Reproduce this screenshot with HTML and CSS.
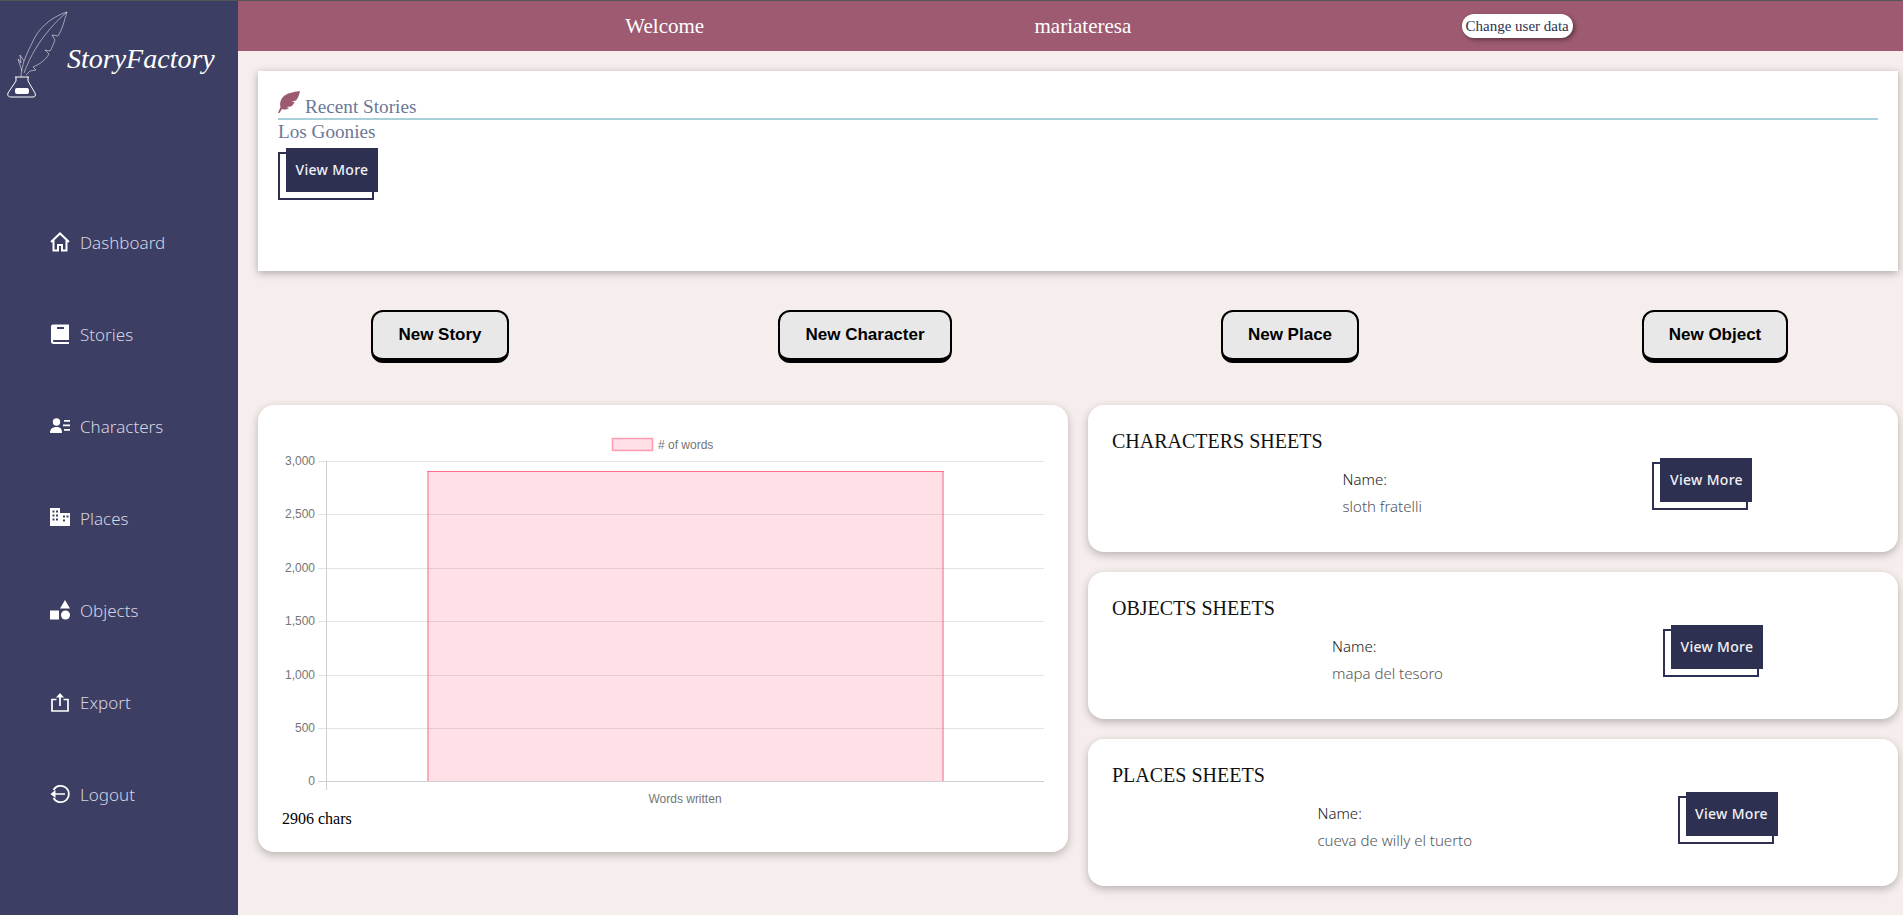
FILE: index.html
```html
<!DOCTYPE html>
<html lang="en">
<head>
    <meta charset="UTF-8">
    <meta name="viewport" content="width=device-width, initial-scale=1.0">
    <title>StoryFactory</title>
    <link rel="stylesheet" href="styles.css">
</head>
<body>
    <aside class="sidebar">
        <div class="logo">
            <svg class="logo-mark" viewBox="0 0 72 100" fill="none" stroke="#fff">
                <path stroke-width="0.7" stroke-opacity="0.75" d="M67 11C54 15 42 24 35 36C31 44 27 52 24 60C23 64 21 70 21 76M67 11C64 20 63 27 58 35L52 34L55 39C53 44 52 47 50 50L45 49L49 53C45 60 38 64 33 66L36 69L30 70L26 74M67 11C56 20 44 34 36 47C31 55 27 64 24 72M24 60L20 54L21 62L18 58L22 70"/>
                <path stroke-width="1" d="M15 76H29M16 76V80L8 92C7 95 9 96 11 96H33C35 96 36 95 35 92L28 80V76"/>
                <rect x="15" y="87" width="14" height="6" rx="2" fill="#fff" stroke="none"/>
            </svg>
            <span class="logo-text">StoryFactory</span>
        </div>
        <nav class="menu">
            <a class="menu-item" href="#">
                <svg class="menu-icon" viewBox="0 0 20 20" fill="none" stroke="#fff" stroke-width="2"><path d="M1 10L10 1.5L19 10M3.5 8V18.5H8V13H12V18.5H16.500V8"/></svg>
                Dashboard
            </a>
            <a class="menu-item" href="#">
                <svg class="menu-icon" viewBox="0 0 20 20" fill="#fff"><path fill-rule="evenodd" d="M3 0.500H19V16H4C2.500 16 2.500 18 4 18H19V20H3.500C1.800 20 1 19 1 17.500V2.500C1 1.200 1.800 0.500 3 0.500ZM7 3V5H14V3Z"/></svg>
                Stories
            </a>
            <a class="menu-item" href="#">
                <svg class="menu-icon" viewBox="0 0 20 20" fill="#fff"><circle cx="6.500" cy="6" r="3.700"/><path d="M0 17C0 13 2.500 11 6.500 11S12 13 12 17ZM14 4H20V5.800H14ZM13 8.500H20V10.300H13ZM14 13H20V14.800H14Z"/></svg>
                Characters
            </a>
            <a class="menu-item" href="#">
                <svg class="menu-icon" viewBox="0 0 20 20" fill="#fff"><path fill-rule="evenodd" d="M0 0H10V5H20V18H0ZM2.500 2.500V4.500H4.500V2.500ZM6 2.500V4.500H8V2.500ZM2.500 6.500V8.500H4.500V6.500ZM6 6.500V8.500H8V6.500ZM13 7.500V9.500H15V7.500ZM16.500 7.500V9.500H18.500V7.500ZM2.500 10.500V12.500H4.500V10.500ZM6 10.500V12.500H8V10.500ZM13 11.500V13.500H15V11.500Z"/></svg>
                Places
            </a>
            <a class="menu-item" href="#">
                <svg class="menu-icon" viewBox="0 0 20 20" fill="#fff"><path d="M15 0L20 8.500H10ZM0 10.500H9V19.500H0Z"/><circle cx="15.500" cy="15" r="4.500"/></svg>
                Objects
            </a>
            <a class="menu-item" href="#">
                <svg class="menu-icon" viewBox="0 0 20 20" fill="none" stroke="#fff" stroke-width="1.700"><path d="M6.500 7.500H2V19H18V7.500H13.500M10 14V2"/><path d="M6 5.500L10 1L14 5.500Z" fill="#fff" stroke="none"/></svg>
                Export
            </a>
            <a class="menu-item" href="#">
                <svg class="menu-icon" viewBox="0 0 20 20" fill="none" stroke="#fff" stroke-width="1.700"><path d="M3.500 6A8.200 8.200 0 1 1 3.500 14M5 10H15"/><path d="M0.500 10L5.500 6V14Z" fill="#fff" stroke="none"/></svg>
                Logout
            </a>
        </nav>
    </aside>

    <div class="main">
        <header class="topbar">
            <span>Welcome</span>
            <span>mariateresa</span>
            <a class="user-link" href="#">Change user data</a>
        </header>

        <section class="recent">
            <div class="recent-head">
                <svg class="feather" viewBox="0 0 22 22" fill="#9c5a70"><path d="M22 0C15 1 8 2.500 5 6C2 9.500 1.500 13 2.500 16L0 22H1.500L4 18C7 19 9 18.500 11 17L8.500 16L13 15.500C15 14 16 12.500 16.500 11L13.500 10.500L18 9.500C20 7 21.500 3 22 0Z"/></svg>
                <span>Recent Stories</span>
            </div>
            <div class="recent-title">Los Goonies</div>
            <a class="more-btn" href="#">View More</a>
        </section>

        <div class="actions">
            <div class="action-col"><button class="action-btn">New Story</button></div>
            <div class="action-col"><button class="action-btn">New Character</button></div>
            <div class="action-col"><button class="action-btn">New Place</button></div>
            <div class="action-col"><button class="action-btn">New Object</button></div>
        </div>

        <div class="panels">
            <section class="chart-card">
                <svg class="chart" viewBox="0 0 762 384" width="762" height="384">
                    <g stroke="#e3e3e3" stroke-width="1">
                        <path d="M36 36.500H762M36 89.500H762M36 143.500H762M36 196.500H762M36 250.500H762M36 303.500H762"/>
                    </g>
                    <path d="M44.500 36V365M36 356.500H762" stroke="#cfcfcf" stroke-width="1"/>
                    <rect x="145" y="46" width="517" height="310" fill="#ff6384" fill-opacity="0.2"/>
                    <path d="M145 46.500H662" fill="none" stroke="#ff6384" stroke-opacity="0.9" stroke-width="1"/>
                    <path d="M146 47V356M661 47V356" fill="none" stroke="#ff6384" stroke-opacity="0.45" stroke-width="2"/>
                    <rect x="330.500" y="13.500" width="40" height="12" fill="#ff6384" fill-opacity="0.2" stroke="#ff6384" stroke-opacity="0.6" stroke-width="1.500"/>
                    <g class="chart-text">
                        <text x="376" y="24">
                            # of words
                        </text>
                        <text x="403" y="378" text-anchor="middle">Words written</text>
                        <g text-anchor="end">
                            <text x="33" y="40">3,000</text>
                            <text x="33" y="93">2,500</text>
                            <text x="33" y="147">2,000</text>
                            <text x="33" y="200">1,500</text>
                            <text x="33" y="254">1,000</text>
                            <text x="33" y="307">500</text>
                            <text x="33" y="360">0</text>
                        </g>
                    </g>
                </svg>
                <div class="chars">2906 chars</div>
            </section>

            <div class="sheets">
                <section class="sheet-card">
                    <h3>CHARACTERS SHEETS</h3>
                    <div class="sheet-row">
                        <div class="sheet-name"><p class="name-label">Name:</p><p>sloth fratelli</p></div>
                        <a class="more-btn" href="#">View More</a>
                    </div>
                </section>
                <section class="sheet-card">
                    <h3>OBJECTS SHEETS</h3>
                    <div class="sheet-row">
                        <div class="sheet-name"><p class="name-label">Name:</p><p>mapa del tesoro</p></div>
                        <a class="more-btn" href="#">View More</a>
                    </div>
                </section>
                <section class="sheet-card">
                    <h3>PLACES SHEETS</h3>
                    <div class="sheet-row">
                        <div class="sheet-name"><p class="name-label">Name:</p><p>cueva de willy el tuerto</p></div>
                        <a class="more-btn" href="#">View More</a>
                    </div>
                </section>
            </div>
        </div>
    </div>
</body>
</html>
```

FILE: styles.css
```css
/* General */
body {
    margin: 0;
    height: 914px;
    display: flex;
    overflow: hidden;
    border-top: 1px solid #555;
    background-color: #f6eeec;
    font-family: 'Liberation Serif', serif;
}

a {
    text-decoration: none;
}

/* Sidebar */
.sidebar {
    width: 238px;
    flex-shrink: 0;
    background-color: #3d3e63;
}

.logo {
    height: 195px;
    display: flex;
    align-items: flex-start;
}

.logo-mark {
    width: 72px;
    height: 100px;
    flex-shrink: 0;
}

.logo-text {
    margin: 38px 0 0 -5px;
    color: #fff;
    font-size: 28px;
    font-style: italic;
    line-height: 40px;
}

.menu-item {
    height: 92px;
    padding-left: 50px;
    display: flex;
    align-items: center;
    gap: 10px;
    color: #d4d4e2;
    font-family: 'Noto Sans', sans-serif;
    font-size: 17px;
    font-weight: 300;
}

.menu-icon {
    width: 20px;
    height: 20px;
}

/* Top bar */
.main {
    flex: 1;
    min-width: 0;
}

.topbar {
    height: 50px;
    padding-left: 57px;
    display: flex;
    justify-content: space-evenly;
    align-items: center;
    background-color: #9e5a70;
    color: #fff;
    font-size: 21px;
}

.user-link {
    width: 111px;
    height: 24px;
    border-radius: 12px;
    background: #fff;
    box-shadow: 2px 2px 4px rgba(0, 0, 0, 0.4);
    color: #2d3050;
    font-size: 15px;
    line-height: 24px;
    text-align: center;
    white-space: nowrap;
}

/* Recent stories */
.recent {
    height: 200px;
    box-sizing: border-box;
    margin: 20px 5px 0 20px;
    padding: 20px;
    background: #fff;
    box-shadow: 0 2px 8px rgba(0, 0, 0, 0.3);
    color: #6b7896;
    font-size: 19.2px;
}

.recent-head {
    height: 27px;
    display: flex;
    align-items: flex-end;
    gap: 5px;
    border-bottom: 2px solid #a8d0da;
    line-height: 22px;
}

.feather {
    width: 22px;
    height: 22px;
    margin-bottom: 5px;
}

.recent-title {
    line-height: 23px;
    margin-bottom: 5px;
}

/* Dark button with offset outline */
.more-btn {
    position: relative;
    display: block;
    flex-shrink: 0;
    width: 92px;
    height: 44px;
    margin-left: 8px;
    background: #2d3050;
    color: #f0f0f5;
    font-family: 'Noto Sans', sans-serif;
    font-size: 14px;
    font-weight: 500;
    line-height: 44px;
    text-align: center;
    letter-spacing: 0.3px;
}

.more-btn::before {
    content: "";
    position: absolute;
    left: -8px;
    top: 4px;
    z-index: -1;
    width: 92px;
    height: 44px;
    border: 2px solid #2d3050;
}

.recent .more-btn,
.sheet-card .more-btn {
    z-index: 0;
}

/* New ... buttons */
.actions {
    display: grid;
    grid-template-columns: repeat(4, 425px);
    margin: 39px 0 42px -10.5px;
}

.action-col {
    display: flex;
    justify-content: center;
}

.action-btn {
    height: 53px;
    padding: 0 25px;
    border: 2px solid #000;
    border-bottom-width: 5px;
    border-radius: 12px;
    background: #e8e8e8;
    color: #000;
    font-family: 'Liberation Sans', sans-serif;
    font-size: 17px;
    font-weight: bold;
}

/* Chart and sheets */
.panels {
    display: grid;
    grid-template-columns: 810px 810px;
    gap: 20px;
    margin-left: 20px;
    align-items: start;
}

.chart-card {
    padding: 20px 24px 23px;
    border-radius: 16px;
    background: #fff;
    box-shadow: 0 3px 8px rgba(0, 0, 0, 0.25);
}

.chart {
    display: block;
}

.chart-text {
    fill: #757575;
    font-family: 'Liberation Sans', sans-serif;
    font-size: 12px;
}

.chars {
    color: #000;
    font-size: 16px;
    line-height: 20px;
}

.sheets {
    display: flex;
    flex-direction: column;
    gap: 20px;
}

.sheet-card {
    height: 147px;
    box-sizing: border-box;
    padding: 24px;
    border-radius: 16px;
    background: #fff;
    box-shadow: 0 3px 8px rgba(0, 0, 0, 0.25);
}

.sheet-card h3 {
    margin: 0 0 5px;
    color: #111;
    font-size: 20px;
    font-weight: normal;
    line-height: 24px;
}

.sheet-row {
    display: flex;
    justify-content: space-evenly;
    align-items: flex-start;
    margin-right: -109px;
}

.sheet-row .more-btn {
    margin-left: 8px;
    margin-right: 0;
}

.sheet-name {
    padding-top: 8px;
    color: #555;
    font-family: 'Noto Sans', sans-serif;
    font-size: 15px;
    font-weight: 300;
    line-height: 27px;
}

.sheet-name p {
    margin: 0;
}

.sheet-name .name-label {
    color: #222;
}
```
